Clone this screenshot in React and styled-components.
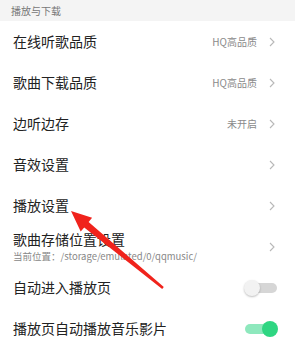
import React from 'react';
import styled, { createGlobalStyle } from 'styled-components';

const GlobalStyle = createGlobalStyle`
  body {
    margin: 0;
    background: #fff;
    font-family: "Noto Sans CJK SC", "Noto Sans", sans-serif;
  }
`;

const Page = styled.div`
  position: relative;
  width: 295px;
  height: 349px;
  overflow: hidden;
  background: #fff;
`;

const SectionHeader = styled.div`
  height: 21px;
  padding-left: 11px;
  display: flex;
  align-items: center;
  background: #f4f4f4;
  color: #777;
  font-size: 10px;
  line-height: 1;
`;

const Row = styled.div`
  height: 41px;
  padding: 0 20px 0 13px;
  display: flex;
  align-items: center;
  justify-content: space-between;
`;

const Texts = styled.div`
  display: flex;
  flex-direction: column;
  gap: ${(p) => (p.$two ? '4px' : '0')};
`;

const Title = styled.div`
  color: #222;
  font-size: 14px;
  line-height: 15px;
`;

const Sub = styled.div`
  color: #888;
  font-size: 9.5px;
  line-height: 11px;
`;

const Right = styled.div`
  display: flex;
  align-items: center;
  gap: 12px;
`;

const Value = styled.span`
  color: #8a8a8a;
  font-size: 10px;
  line-height: 1;
`;

const Switch = styled.div`
  position: relative;
  width: 32px;
  height: 10px;
  margin-right: -2px;
  border-radius: 5px;
  background: ${(p) => (p.$on ? '#8ee8bd' : '#d6d6d6')};

  &::after {
    content: '';
    position: absolute;
    top: -3px;
    ${(p) => (p.$on ? 'right: -1px;' : 'left: -1px;')}
    width: 16px;
    height: 16px;
    border-radius: 50%;
    background: ${(p) => (p.$on ? '#2fd682' : '#f2f2f2')};
    box-shadow: ${(p) => (p.$on ? 'none' : '0 1px 2px rgba(0,0,0,0.25)')};
  }
`;

const Overlay = styled.svg`
  position: absolute;
  left: 0;
  top: 0;
  pointer-events: none;
`;

const Chevron = () => (
  <svg width="6" height="10" viewBox="0 0 6 10">
    <path d="M1 1 L5 5 L1 9" fill="none" stroke="#b8b8b8" strokeWidth="1.1" />
  </svg>
);

const rows = [
  { title: '在线听歌品质', value: 'HQ高品质' },
  { title: '歌曲下载品质', value: 'HQ高品质' },
  { title: '边听边存', value: '未开启' },
  { title: '音效设置' },
  { title: '播放设置' },
  { title: '歌曲存储位置设置', sub: '当前位置：/storage/emulated/0/qqmusic/' },
  { title: '自动进入播放页', toggle: false },
  { title: '播放页自动播放音乐影片', toggle: true },
];

export default function App() {
  return (
    <Page>
      <GlobalStyle />
      <SectionHeader>播放与下载</SectionHeader>
      {rows.map((r) => (
        <Row key={r.title}>
          <Texts $two={!!r.sub}>
            <Title>{r.title}</Title>
            {r.sub && <Sub>{r.sub}</Sub>}
          </Texts>
          {r.toggle === undefined ? (
            <Right>
              {r.value && <Value>{r.value}</Value>}
              <Chevron />
            </Right>
          ) : (
            <Switch $on={r.toggle} />
          )}
        </Row>
      ))}
      <Overlay width="295" height="349" viewBox="0 0 295 349">
        <polygon
          points="71,211 92.1,217.8 88.6,222 163.8,287.1 162.2,288.9 84.2,227.4 80.7,231.6"
          fill="#f0231c"
        />
      </Overlay>
    </Page>
  );
}
